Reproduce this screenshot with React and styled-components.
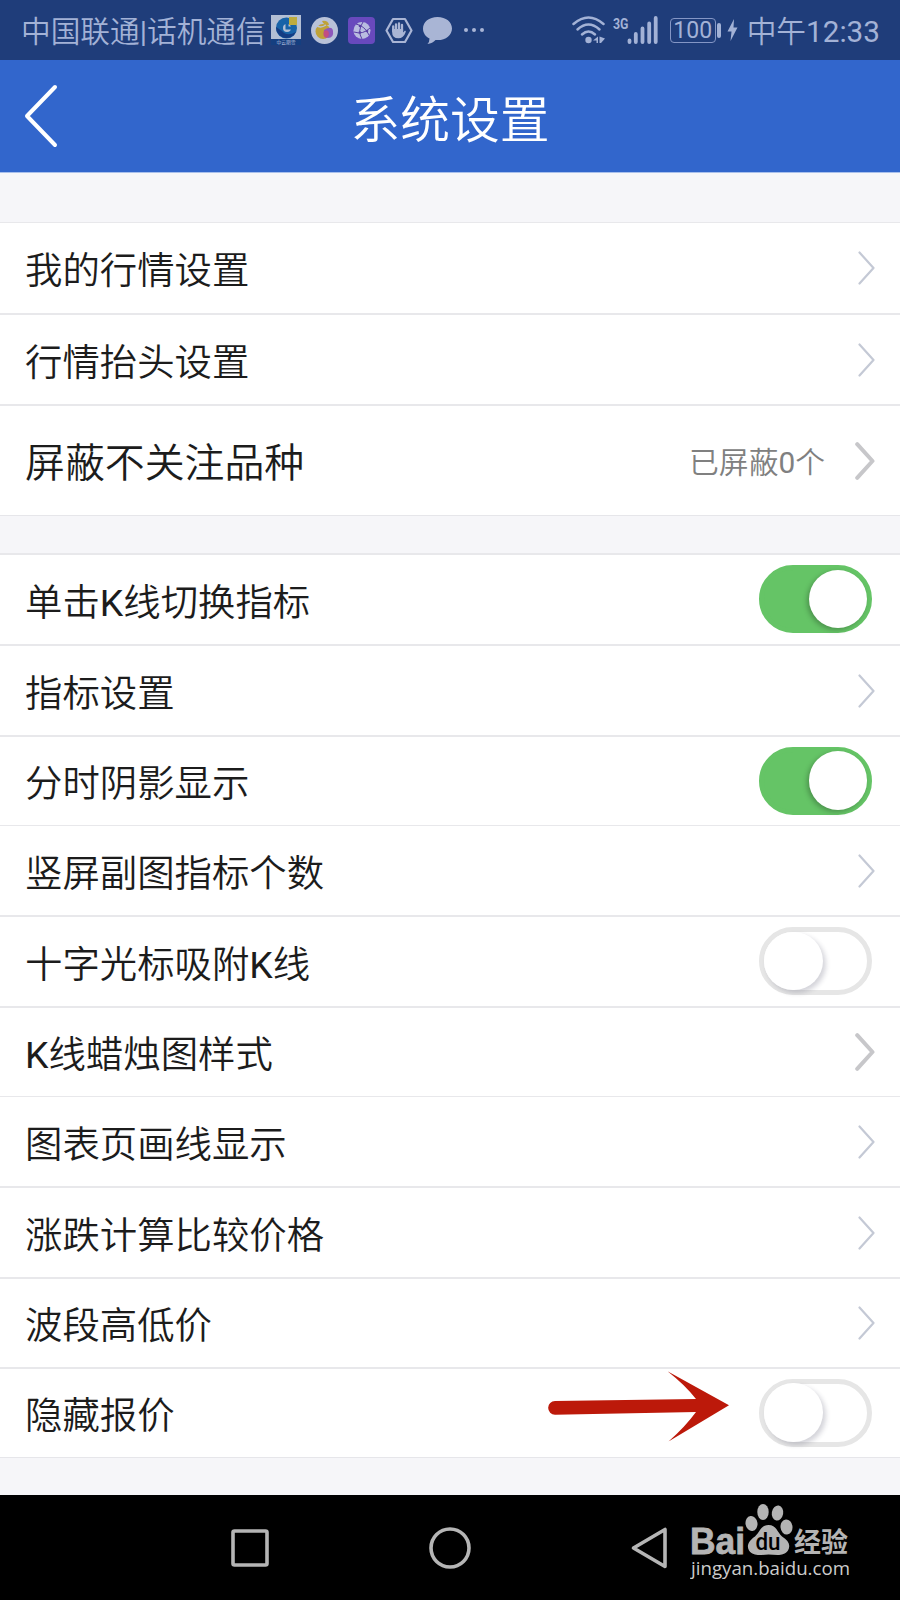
import styled, { createGlobalStyle } from "styled-components";

const QUOTE_ROWS = [
  { label: "我的行情设置", height: 91, line: 1 },
  { label: "行情抬头设置", height: 91 },
  { label: "屏蔽不关注品种", height: 111, large: true, value: "已屏蔽0个" },
];

const CHART_ROWS = [
  { label: "单击K线切换指标", height: 91, toggle: true, on: true },
  { label: "指标设置", height: 91 },
  { label: "分时阴影显示", height: 90, toggle: true, on: true },
  { label: "竖屏副图指标个数", height: 90, line: 1 },
  { label: "十字光标吸附K线", height: 91, toggle: true },
  { label: "K线蜡烛图样式", height: 90, bold: true },
  { label: "图表页画线显示", height: 90, line: 1 },
  { label: "涨跌计算比较价格", height: 91 },
  { label: "波段高低价", height: 90 },
  { label: "隐藏报价", height: 90, toggle: true, arrow: true },
];

export default function App() {
  return (
    <>
      <GlobalStyle />
      <Screen>
        <StatusBar />
        <Header>
          <BackIcon viewBox="0 0 34 64">
            <path d="M31 3 L3 32 L31 61" />
          </BackIcon>
          <Title>系统设置</Title>
        </Header>

        <List $top={49}>
          {QUOTE_ROWS.map((row) => (
            <SettingRow key={row.label} {...row} />
          ))}
        </List>
        <List $top={37}>
          {CHART_ROWS.map((row) => (
            <SettingRow key={row.label} {...row} />
          ))}
        </List>

        <NavBar>
          <NavIcon viewBox="0 0 42 42">
            <rect x="4" y="4" width="34" height="34" rx="1.5" />
          </NavIcon>
          <NavIcon viewBox="0 0 42 42">
            <circle cx="21" cy="21" r="19" />
          </NavIcon>
          <NavIcon viewBox="0 0 42 42">
            <path d="M36 2.5 V39.500 L4.500 21 Z" />
          </NavIcon>
          <Watermark />
        </NavBar>
      </Screen>
    </>
  );
}

function SettingRow({ label, height, line = 2, large, bold, value, toggle, on, arrow }) {
  return (
    <Row $height={height} $line={line}>
      <Label $large={large}>{label}</Label>
      {value && <Value>{value}</Value>}
      {arrow && (
        <Arrow viewBox="0 0 181 71">
          <path d="M7 30 L148 28 Q137 14 119.500 .3 L181 34.300 L120.500 70.500 Q137 56 148 41 L7 43.700 A6.850 6.850 0 0 1 7 30 Z" />
        </Arrow>
      )}
      {toggle ? (
        <Switch $on={on}>
          <Knob $on={on} />
        </Switch>
      ) : large || bold ? (
        <Chevron $bold viewBox="0 0 20 38" width="20" height="38">
          <path d="M2.200 2.200 L17.500 19 L2.200 35.800" />
        </Chevron>
      ) : (
        <Chevron viewBox="0 0 17 34" width="17" height="34">
          <path d="M1.500 1.500 L15.500 17 L1.500 32.500" />
        </Chevron>
      )}
    </Row>
  );
}

function StatusBar() {
  return (
    <Status>
      <Carrier>中国联通|话机通信</Carrier>
      <Notifications>
        <svg width="30" height="30" viewBox="0 0 30 30">
          <rect width="30" height="24" fill="#b3bfd4" />
          <rect y="24" width="30" height="6" fill="#153f80" />
          <circle cx="15.500" cy="13" r="10.500" fill="#1763a8" />
          <path d="M5 12 A10.500 10.500 0 0 0 25 17 Q16 22 11 16 Z" fill="#143c83" />
          <circle cx="16" cy="13" r="4" fill="#b3bfd4" />
          <path d="M16 7 V13 H21" stroke="#1763a8" strokeWidth="3" fill="none" />
          <path d="M18 2 H26 V10 H18 Z" fill="#bdac3f" />
          <text x="5.500" y="28.500" textLength="19" lengthAdjust="spacingAndGlyphs" fontSize="4.500" fill="#c0cae0">
            中云期货
          </text>
        </svg>
        <svg width="27" height="27" viewBox="0 0 27 27">
          <circle cx="13.500" cy="13.500" r="13.500" fill="#b9c2d8" />
          <circle cx="12" cy="14.500" r="7.500" fill="#bfa238" />
          <path d="M13 13 Q21 8 22 14 Q23 21 17 21 Q12 20 13 13 Z" fill="#8d58bb" />
          <path d="M13 14 Q17 12 18 16 Q18 20 15 21 Q11 19 13 14 Z" fill="#c24e83" />
          <path d="M11 4 Q17 3 18 8 Q13 9 11 4 Z" fill="#bfa238" />
          <path d="M5 8 Q9 12 15 8" stroke="#b9c2d8" strokeWidth="1.500" fill="none" />
        </svg>
        <svg width="27" height="27" viewBox="0 0 27 27">
          <rect width="27" height="27" rx="4" fill="#6849bd" />
          <circle cx="14" cy="13.500" r="8.500" fill="#b9bce0" />
          <g stroke="#5a3fa5" strokeWidth="1" fill="none">
            <path d="M8 7 Q17 9 21 18 M15 5 Q9 14 14 22 M6 15 Q15 18 22 11" />
          </g>
          <g fill="#5a3fa5">
            <circle cx="12" cy="9" r="1.300" />
            <circle cx="11.800" cy="15.500" r="1.300" />
            <circle cx="19" cy="14" r="1.300" />
          </g>
        </svg>
        <svg width="28" height="27" viewBox="0 0 28 27">
          <path
            d="M8 2 H20 L26.500 13.500 L20 25 H8 L1.500 13.500 Z"
            fill="none"
            stroke="#a9b5d5"
            strokeWidth="2.200"
            strokeLinejoin="round"
          />
          <path
            d="M8.200 14 V9.500 M11 14 V7.500 M14 14 V6.500 M17 14 V8"
            stroke="#a9b5d5"
            strokeWidth="2.300"
            strokeLinecap="round"
          />
          <path d="M7.100 12 H18.100 V15.500 L20 13.500 Q21.500 14 20.500 15.500 Q18.500 21.300 13.500 21.300 Q7.100 21.300 7.100 15 Z" fill="#a9b5d5" />
        </svg>
        <svg width="29" height="27" viewBox="0 0 29 27">
          <path
            d="M14.500 0 C6 0 0 5 0 11.500 C0 16 2.500 19.500 6.500 21.500 Q6.500 25 4.500 27 Q9.500 26.500 12.500 23 C22 24 29 18.500 29 11.500 C29 5 23 0 14.500 0 Z"
            fill="#a9b5d5"
          />
        </svg>
        <Dots width="22" height="6" viewBox="0 0 22 6">
          <circle cx="3" cy="3" r="2" />
          <circle cx="11" cy="3" r="2" />
          <circle cx="19" cy="3" r="2" />
        </Dots>
      </Notifications>

      <Signals>
        <svg width="33" height="28" viewBox="0 0 33 28">
          <g fill="none" stroke="#a3b2d6" strokeWidth="2.500" strokeLinecap="round">
            <path d="M1.500 8 Q16.500 -5 31.500 8" />
            <path d="M5.500 13.500 Q16.500 3.500 27.500 13.500" />
            <path d="M10 18.500 Q16.500 12.500 23 18.500" />
          </g>
          <circle cx="16.500" cy="24" r="3.200" fill="#a3b2d6" />
          <path d="M21 24.500 L26 20.500 V27 H24.500 V24.500 Z M27.500 20.500 L33 22.500 L29 27 H27.500 Z" fill="#a3b2d6" />
        </svg>
        <Cell width="45" height="28" viewBox="0 0 45 28">
          <text x="0" y="12.500" textLength="15.500" lengthAdjust="spacingAndGlyphs">
            3G
          </text>
          <path d="M16.500 24.500 V26 M22.800 18 V26 M29.500 12.500 V26 M36.200 7.500 V26 M42.700 2 V26" />
        </Cell>
        <Battery>
          <BatteryBody>100</BatteryBody>
          <BatteryTip />
        </Battery>
        <Bolt width="11" height="22" viewBox="0 0 11 22">
          <path d="M7 0 L.5 12.500 H4.500 L3.500 22 L10.500 8.500 H6.500 Z" />
        </Bolt>
        <Clock>中午12:33</Clock>
      </Signals>
    </Status>
  );
}

function Watermark() {
  return (
    <WatermarkArt width="162" height="80" viewBox="0 0 162 80">
      <text className="brand" x="0" y="50" textLength="55" lengthAdjust="spacingAndGlyphs">
        Bai
      </text>
      <ellipse cx="61.500" cy="19.500" rx="6" ry="7.500" transform="rotate(-8 61.500 19.500)" />
      <ellipse cx="73" cy="8" rx="5.700" ry="8" />
      <ellipse cx="87.500" cy="9" rx="5.700" ry="7.500" transform="rotate(10 87.500 9)" />
      <ellipse cx="96.500" cy="23" rx="6" ry="7.500" transform="rotate(-5 96.500 23)" />
      <path d="M78.500 21 C71 21 70 28 65 32.500 C57 38 57 43 59 46.500 C63.500 53 72 50.500 78.500 50.500 C85 50.500 93.500 53 98 46.500 C101 41 98.500 36.500 92 32.500 C87 28 86.500 21 78.500 21 Z" />
      <text className="du" x="65.500" y="45.500" textLength="25" lengthAdjust="spacingAndGlyphs">
        du
      </text>
      <text className="cn" x="104" y="48" textLength="54" lengthAdjust="spacingAndGlyphs">
        经验
      </text>
      <text className="url" x="1" y="71" textLength="159" lengthAdjust="spacingAndGlyphs">
        jingyan.baidu.com
      </text>
    </WatermarkArt>
  );
}

const GlobalStyle = createGlobalStyle`
  * {
    box-sizing: border-box;
  }

  body {
    margin: 0;
    background-color: #f6f6f9;
    font-family: Roboto, "Noto Sans CJK SC DemiLight", "Noto Sans CJK SC", sans-serif;
  }
`;

const Screen = styled.main`
  display: flex;
  flex-direction: column;
  width: 900px;
  height: 1600px;
  overflow: hidden;
  background-color: #f6f6f9;
`;

const Status = styled.div`
  display: flex;
  align-items: center;
  justify-content: space-between;
  flex: none;
  height: 60px;
  padding: 0 20px 0 21px;
  background-color: #1f3d7a;
  color: #a3b2d6;
`;

const Carrier = styled.span`
  width: 250px;
  padding-top: 3px;
  font-size: 29.7px;
  line-height: 57px;
  white-space: nowrap;
`;

const Notifications = styled.div`
  display: flex;
  align-items: center;
  gap: 10px;
  margin-right: auto;
`;

const Dots = styled.svg`
  margin-left: 1px;
  fill: #a9b5d5;
`;

const Signals = styled.div`
  display: flex;
  align-items: center;
`;

const Cell = styled.svg`
  margin-left: 8px;

  text {
    fill: #a3b2d6;
    font-size: 15.5px;
    font-weight: 700;
  }

  path {
    stroke: #a3b2d6;
    stroke-width: 3.8;
    stroke-linecap: round;
  }
`;

const Battery = styled.div`
  display: flex;
  align-items: center;
  margin-left: 12px;
`;

const BatteryBody = styled.span`
  width: 46px;
  height: 25px;
  border: 1.5px solid #8496c5;
  border-radius: 4px;
  font-size: 23px;
  line-height: 23px;
  text-align: center;
`;

const BatteryTip = styled.span`
  width: 3.5px;
  height: 15px;
  margin-left: 1.5px;
  border-radius: 2px;
  background-color: #a3b2d6;
`;

const Bolt = styled.svg`
  margin-left: 6px;
  fill: #a3b2d6;
`;

const Clock = styled.span`
  margin-left: 9px;
  padding-top: 3px;
  font-size: 29.7px;
  line-height: 57px;
  white-space: nowrap;
`;

const Header = styled.header`
  display: grid;
  grid-template-columns: 60px 1fr 60px;
  align-items: center;
  flex: none;
  height: 113px;
  border-bottom: 1px solid #a9c0ec;
  background-color: #3266cc;
`;

const BackIcon = styled.svg`
  width: 34px;
  height: 64px;
  margin-left: 24px;
  fill: none;
  stroke: #fff;
  stroke-width: 4;
  stroke-linecap: round;
  stroke-linejoin: round;
`;

const Title = styled.h1`
  margin: 0;
  padding-top: 10px;
  color: #fff;
  font-size: 49.8px;
  font-weight: 400;
  line-height: 60px;
  text-align: center;
`;

const List = styled.section`
  flex: none;
  margin-top: ${({ $top }) => $top}px;
  border-bottom: 1px solid #e6e6ea;
  background-color: #fff;
`;

const Row = styled.div`
  display: flex;
  align-items: center;
  height: ${({ $height }) => $height}px;
  padding: 0 25px;
  border-top: ${({ $line }) => $line}px solid #e8e8eb;
`;

const Label = styled.span`
  flex: 1;
  padding-top: 6px;
  color: #1c1c1c;
  font-size: ${({ $large }) => ($large ? "39.9px" : "37.4px")};
  line-height: 50px;
  white-space: nowrap;
`;

const Value = styled.span`
  padding-top: 5px;
  margin-right: 30px;
  color: #808080;
  font-size: 29.8px;
  line-height: 40px;
`;

const Chevron = styled.svg`
  fill: none;
  stroke: ${({ $bold }) => ($bold ? "#c7c7ca" : "#c4c9d5")};
  stroke-width: ${({ $bold }) => ($bold ? 4 : 2.2)};
  stroke-linecap: round;
  stroke-linejoin: round;
`;

const Arrow = styled.svg`
  width: 181px;
  height: 71px;
  margin: 0 30px 13px 0;
  fill: #bc190a;
`;

const Switch = styled.div`
  display: flex;
  align-items: center;
  justify-content: ${({ $on }) => ($on ? "flex-end" : "flex-start")};
  width: 113px;
  height: 68px;
  margin: 0 3px 1px 0;
  border: 5px solid ${({ $on }) => ($on ? "#65c466" : "#e6e6e6")};
  border-radius: 34px;
  background-color: ${({ $on }) => ($on ? "#65c466" : "#fff")};
`;

const Knob = styled.div`
  width: 58.5px;
  height: 58.5px;
  border-radius: 50%;
  background-color: #fff;
  box-shadow: ${({ $on }) =>
    $on ? "-2px 2px 5px rgba(0, 0, 0, 0.25)" : "3px 3px 5px rgba(40, 40, 70, 0.2)"};
`;

const NavBar = styled.nav`
  position: relative;
  display: grid;
  grid-template-columns: repeat(3, 200px);
  justify-content: center;
  justify-items: center;
  align-items: center;
  flex: none;
  height: 105px;
  margin-top: auto;
  background-color: #000;
`;

const NavIcon = styled.svg`
  width: 42px;
  height: 42px;
  fill: none;
  stroke: #b5b5b5;
  stroke-width: 3.6;
  stroke-linejoin: round;
`;

/* Sits over the right end of the navigation bar. */
const WatermarkArt = styled.svg`
  position: absolute;
  top: 9px;
  left: 690px;
  fill: #b4b4b4;

  .brand {
    font-family: "Liberation Sans", sans-serif;
    font-size: 36px;
    font-weight: 700;
    stroke: #b4b4b4;
    stroke-width: 0.8;
  }

  .du {
    fill: #000;
    font-size: 24px;
    font-weight: 500;
  }

  .cn {
    font-family: "Noto Sans CJK SC", sans-serif;
    font-size: 27px;
    font-weight: 700;
  }

  .url {
    fill: #ccc;
    font-family: "Open Sans", sans-serif;
    font-size: 19px;
    font-weight: 500;
  }
`;
